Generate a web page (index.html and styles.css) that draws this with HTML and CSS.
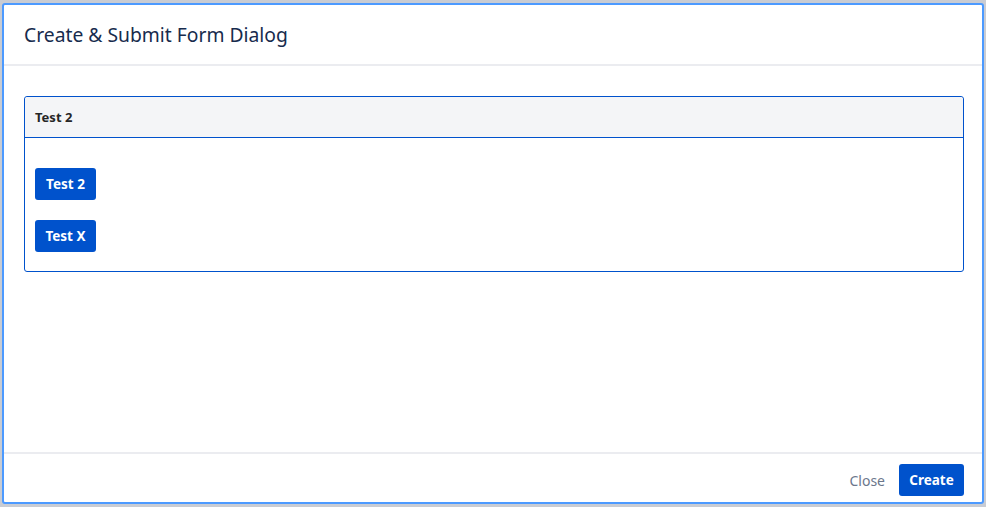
FILE: index.html
```html
<!DOCTYPE html>
<html lang="en">
<head>
<meta charset="utf-8">
<title>Create &amp; Submit Form Dialog</title>
<link rel="stylesheet" href="styles.css">
</head>
<body>
<div class="backdrop">
  <div class="dialog" role="dialog" aria-labelledby="dlg-title">
    <header class="dialog-header">
      <h1 id="dlg-title" class="dialog-title">Create &amp; Submit Form Dialog</h1>
    </header>
    <main class="dialog-body">
      <section class="panel">
        <div class="panel-header">Test 2</div>
        <div class="panel-body">
          <button class="btn btn-primary btn-fixed">Test 2</button>
          <button class="btn btn-primary btn-fixed">Test X</button>
        </div>
      </section>
    </main>
    <footer class="dialog-footer">
      <button class="btn btn-subtle">Close</button>
      <button class="btn btn-primary btn-create">Create</button>
    </footer>
  </div>
</div>
</body>
</html>
```

FILE: styles.css
```css
* { box-sizing: border-box; }
html, body {
  margin: 0;
  height: 100%;
}
body {
  background: #c9ccd3;
  font-family: "Noto Sans", "Open Sans", sans-serif;
  color: #172b4d;
  overflow: hidden;
}
.backdrop {
  height: 507px;
  padding: 3px 2px 3px 2px;
  display: flex;
  flex-direction: column;
}
.dialog {
  flex: 1;
  display: flex;
  flex-direction: column;
  background: #ffffff;
  border: 2px solid #4c9aff;
  border-radius: 3px;
}
.dialog-header {
  height: 61px;
  padding: 0 20px;
  display: flex;
  align-items: center;
  border-bottom: 2px solid #ebecf0;
}
.dialog-title {
  margin: 0;
  font-size: 19.3px;
  font-weight: 400;
  color: #172b4d;
}
.dialog-body {
  flex: 1;
  padding: 30px 18px 0 20px;
}
.panel {
  border: 1px solid #0052cc;
  border-radius: 3px;
}
.panel-header {
  height: 41px;
  display: flex;
  align-items: center;
  padding: 0 10px;
  background: #f4f5f7;
  border-bottom: 1px solid #0052cc;
  border-radius: 3px 3px 0 0;
  font-size: 13px;
  font-weight: 700;
  color: #262626;
}
.panel-body {
  display: flex;
  flex-direction: column;
  align-items: flex-start;
  gap: 20px;
  padding: 30px 10px 19px;
}
.btn {
  font-family: inherit;
  height: 32px;
  border: none;
  border-radius: 3px;
  padding: 0 11px;
  font-size: 13.5px;
  font-weight: 700;
  cursor: pointer;
}
.btn-fixed {
  width: 61px;
  padding: 0;
}
.btn-create {
  width: 65px;
  padding: 0;
}
.btn-primary {
  background: #0052cc;
  color: #ffffff;
}
.btn-subtle {
  background: transparent;
  color: #6b778c;
  font-weight: 400;
  font-size: 14px;
  padding: 0 12px;
}
.dialog-footer {
  display: flex;
  justify-content: flex-end;
  gap: 2px;
  border-top: 2px solid #ebecf0;
  padding: 10px 18px 6px 20px;
}
```
